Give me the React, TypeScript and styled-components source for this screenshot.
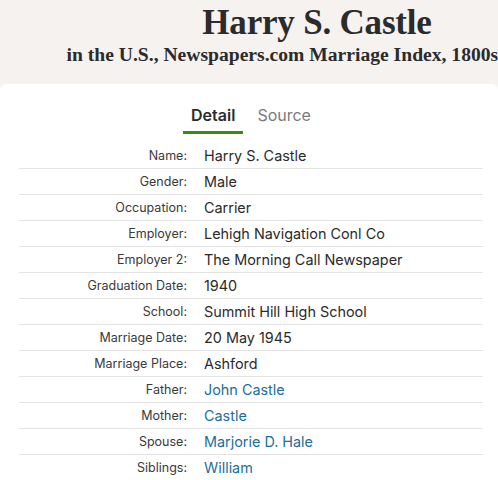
import React from "react"
import styled, { createGlobalStyle } from "styled-components"

const GlobalStyle = createGlobalStyle`
    html, body {
        margin: 0;
        padding: 0;
        background: #f5f2ef;
        overflow: hidden;
    }
`

const Page = styled.div`
    width: 498px;
    height: 480px;
    overflow: hidden;
    background: #f5f2ef;
`

const Header = styled.header`
    width: 634px;
    height: 84px;
    box-sizing: border-box;
    padding-top: 3px;
    text-align: center;
    color: #2b2b2b;
    font-family: "Liberation Serif", "Times New Roman", serif;
    font-weight: 700;
    white-space: nowrap;
`

const Title = styled.h1`
    margin: 0;
    font-size: 35px;
    line-height: 40px;
    letter-spacing: -0.2px;
`

const Subtitle = styled.h2`
    margin: 0;
    font-size: 19.6px;
    line-height: 24px;
`

const Card = styled.section`
    background: #fff;
    border-radius: 6px 6px 0 0;
    height: 396px;
    padding: 20px 15px 0 19px;
    box-sizing: border-box;
    font-family: Inter, "Liberation Sans", sans-serif;
`

const Tabs = styled.nav`
    display: flex;
    justify-content: center;
    gap: 6px;
`

const Tab = styled.div<{ $active?: boolean }>`
    padding: 0 8px 5px;
    font-size: 16px;
    line-height: 22px;
    font-weight: ${(p) => (p.$active ? 600 : 400)};
    color: ${(p) => (p.$active ? "#2b2b2b" : "#7a7a7a")};
    border-bottom: 3px solid ${(p) => (p.$active ? "#3c8a12" : "transparent")};
`

const Facts = styled.dl`
    margin: 9px 0 0;
`

const Row = styled.div`
    display: grid;
    grid-template-columns: 168px 1fr;
    column-gap: 17px;
    align-items: center;
    height: 26px;
    border-bottom: 1px solid #e3e3e3;
    box-sizing: border-box;
`

const Label = styled.dt`
    text-align: right;
    font-size: 12.5px;
    color: #3a3a3a;
`

const Value = styled.dd<{ $link?: boolean }>`
    margin: 0;
    font-size: 14.4px;
    color: ${(p) => (p.$link ? "#1d6f97" : "#2b2b2b")};
    white-space: nowrap;
`

const facts: { label: string; value: string; link?: boolean }[] = [
    { label: "Name", value: "Harry S. Castle" },
    { label: "Gender", value: "Male" },
    { label: "Occupation", value: "Carrier" },
    { label: "Employer", value: "Lehigh Navigation Conl Co" },
    { label: "Employer 2", value: "The Morning Call Newspaper" },
    { label: "Graduation Date", value: "1940" },
    { label: "School", value: "Summit Hill High School" },
    { label: "Marriage Date", value: "20 May 1945" },
    { label: "Marriage Place", value: "Ashford" },
    { label: "Father", value: "John Castle", link: true },
    { label: "Mother", value: "Castle", link: true },
    { label: "Spouse", value: "Marjorie D. Hale", link: true },
    { label: "Siblings", value: "William", link: true },
]

export default function App() {
    return (
        <Page>
            <GlobalStyle />
            <Header>
                <Title>Harry S. Castle</Title>
                <Subtitle>in the U.S., Newspapers.com Marriage Index, 1800s-current</Subtitle>
            </Header>
            <Card>
                <Tabs>
                    <Tab $active>Detail</Tab>
                    <Tab>Source</Tab>
                </Tabs>
                <Facts>
                    {facts.map((f) => (
                        <Row key={f.label}>
                            <Label>{f.label}:</Label>
                            <Value $link={f.link}>{f.value}</Value>
                        </Row>
                    ))}
                </Facts>
            </Card>
        </Page>
    )
}
